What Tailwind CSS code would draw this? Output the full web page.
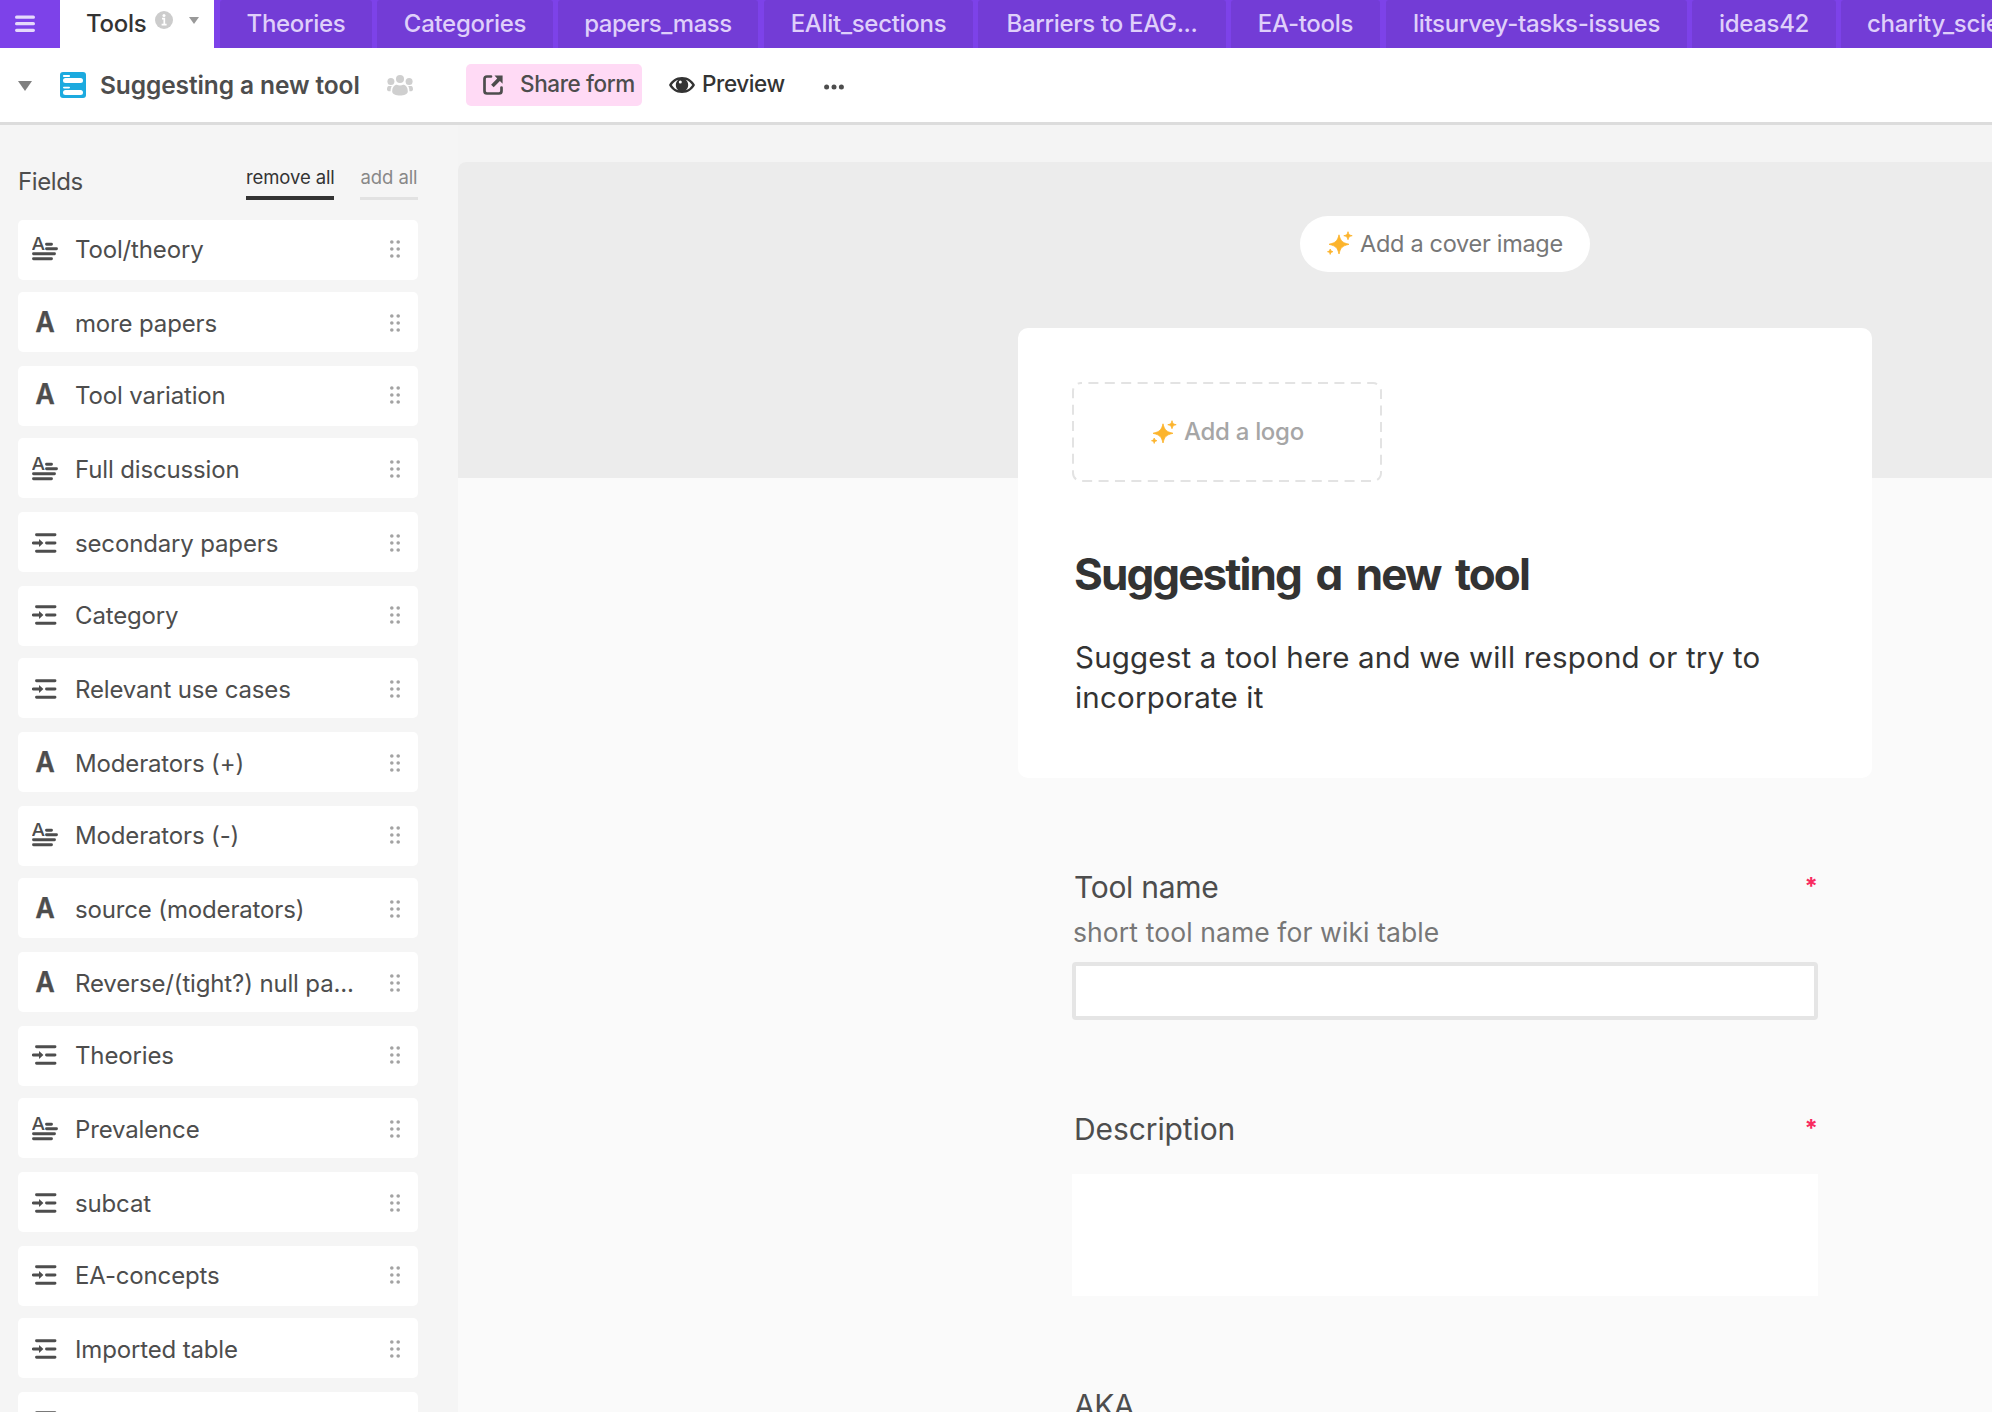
<!DOCTYPE html>
<html lang="en">
<head>
<meta charset="utf-8">
<title>Suggesting a new tool</title>
<script src="https://cdn.jsdelivr.net/npm/@tailwindcss/browser@4"></script>
</head>
<body class="h-[1412px] w-[1992px] overflow-hidden bg-[#f4f4f4] font-['Inter',sans-serif] text-[#4d4d4d]">
<svg class="hidden">
  <symbol id="i-long" viewBox="0 0 26 24">
    <text x="-.5" y="12.800" textLength="13.400" lengthAdjust="spacingAndGlyphs" font-family="Inter" font-weight="500" font-size="17.500" fill="#4d4d4d">A</text>
    <g stroke="#4d4d4d" stroke-width="2.9" stroke-linecap="round"><path d="M14.5 7.2h5M14.5 11.8h10M1.5 16.8h21M1.5 21.8h18"/></g>
  </symbol>
  <symbol id="i-text" viewBox="0 0 26 24">
    <text x="3.500" y="21.300" textLength="19" lengthAdjust="spacingAndGlyphs" font-family="Inter" font-weight="600" font-size="28" fill="#4d4d4d" stroke="#4d4d4d" stroke-width=".5" stroke-linejoin="round">A</text>
  </symbol>
  <symbol id="i-link" viewBox="0 0 26 24">
    <path d="M4.5 3.7h18.5M4.5 20.3h18.5M14.5 12h8.5M1.3 12h7" stroke="#4d4d4d" stroke-width="2.9" stroke-linecap="round" fill="none"/>
    <path d="M7 8l4.4 4L7 16z" fill="#4d4d4d"/>
  </symbol>
  <symbol id="i-grip" viewBox="0 0 10 18">
    <g fill="#a3a3a3"><circle cx="1.8" cy="2" r="1.8"/><circle cx="8.2" cy="2" r="1.8"/><circle cx="1.8" cy="9" r="1.8"/><circle cx="8.2" cy="9" r="1.8"/><circle cx="1.8" cy="16" r="1.8"/><circle cx="8.2" cy="16" r="1.8"/></g>
  </symbol>
  <symbol id="i-spark" viewBox="0 0 26 25">
    <g fill="#fcb42c" stroke="#fcb42c" stroke-width=".8" stroke-linejoin="round"><path d="M12 3.8C13.600 10 15 11.600 22 13.300 15 15 13.600 16.600 12 23 10.400 16.600 9 15 2 13.300 9 11.600 10.400 10 12 3.800z"/><path d="M21 .7c.8 3 1.400 3.400 4.200 4-2.800.6-3.400 1-4.200 4-.8-3-1.400-3.400-4.200-4 2.800-.6 3.400-1 4.200-4z"/><path d="M3.200 18c.5 1.900 1 2.200 2.700 2.700-1.700.5-2.200.8-2.700 2.700-.5-1.900-1-2.200-2.700-2.700 1.700-.5 2.200-.8 2.700-2.700z"/></g>
  </symbol>
</svg>

<nav class="flex h-12 gap-[5px] bg-[#7d42e9] text-[24px] font-medium leading-[47px] tracking-[-0.3px] text-[#dfcffa]">
  <button class="flex w-[55px] items-center pl-[15px]">
    <svg class="h-[18px] w-5" viewBox="0 0 20 18"><path d="M1.600 2.200h16.800M1.600 8.700h16.800M1.600 15.300h16.800" stroke="#e5d9fb" stroke-width="3.200" stroke-linecap="round"/></svg>
  </button>
  <div class="mr-px flex w-[154px] bg-white pl-[26px] text-[#333]">
    <span class="w-[62px]">Tools</span>
    <svg class="ml-[7px] mt-[11px] h-[18px] w-[18px]" viewBox="0 0 18 18"><circle cx="9" cy="9" r="9" fill="#ccc"/><circle cx="9" cy="4.600" r="1.500" fill="#fff"/><path d="M7 7.700h2.300v5.300M6.600 13.600h5" stroke="#fff" stroke-width="1.700" fill="none"/></svg>
    <svg class="ml-4 mt-[17px] h-[7px] w-[10px]" viewBox="0 0 10 7"><path d="M0 0h10L5 7z" fill="#999"/></svg>
  </div>
  <div class="w-[152px] rounded-t-[3px] bg-[#733cd6] text-center">Theories</div>
  <div class="w-[176px] rounded-t-[3px] bg-[#733cd6] text-center">Categories</div>
  <div class="mr-px w-[200px] rounded-t-[3px] bg-[#733cd6] text-center tracking-[-0.450px]">papers_mass</div>
  <div class="w-[209px] rounded-t-[3px] bg-[#733cd6] text-center">EAlit_sections</div>
  <div class="w-[248px] rounded-t-[3px] bg-[#733cd6] text-center">Barriers to EAG...</div>
  <div class="mr-px w-[149px] rounded-t-[3px] bg-[#733cd6] text-center">EA-tools</div>
  <div class="w-[301px] rounded-t-[3px] bg-[#733cd6] text-center">litsurvey-tasks-issues</div>
  <div class="w-[144px] rounded-t-[3px] bg-[#733cd6] text-center">ideas42</div>
  <div class="w-[151px] shrink-0 overflow-hidden whitespace-nowrap rounded-tl-[3px] bg-[#733cd6] pl-[26px]">charity_science</div>
</nav>

<header class="flex h-[77px] items-start border-b-[3px] border-[#dcdcdc] bg-white">
  <svg class="ml-[18px] mt-[33px] h-[10px] w-[14px]" viewBox="0 0 14 10"><path d="M0 0h14L7 10z" fill="#808080"/></svg>
  <svg class="ml-7 mt-6 h-[26px] w-[26px]" viewBox="0 0 26 26"><rect width="26" height="26" rx="3" fill="#1caadf"/><g fill="#fff"><rect x="3" y="3" width="7" height="2" rx=".8"/><rect x="3" y="6" width="20" height="5" rx="2.500"/><rect x="3" y="14.700" width="7" height="1.700" rx=".8"/><rect x="3" y="18" width="20" height="5" rx="2.500"/></g></svg>
  <h1 class="ml-[14px] mt-[17px] w-[287px] whitespace-nowrap text-[24.500px] font-semibold leading-10 tracking-[-0.100px]">Suggesting a new tool</h1>
  <svg class="mt-[27px] h-[21px] w-[26px]" viewBox="0 0 26 21"><g fill="#cfcfcf"><circle cx="13" cy="4" r="4"/><circle cx="3.900" cy="6.400" r="3.500"/><circle cx="22.100" cy="6.400" r="3.500"/><path d="M5.200 16.500c0-4.500 2.300-6.800 4.600-6.800 1 .5 2 .8 3.200.8s2.200-.3 3.200-.8c2.300 0 4.600 2.300 4.600 6.800 0 5.400-15.600 5.400-15.600 0zM1.800 11h3c-.9 1.500-1.200 3.200-1.200 5.300C1.300 16.600 0 15.800 0 14.500 0 12.500.6 11 1.800 11zM24.200 11h-3c.9 1.500 1.200 3.200 1.200 5.300 2.300.3 3.600-.5 3.600-1.800 0-2-.6-3.500-1.800-3.500z"/></g></svg>
  <button class="ml-[53px] mt-4 flex h-[42px] w-[176px] rounded-[5px] bg-[#ffdaf5] pl-[17px] text-[22.500px] font-medium leading-[40px] tracking-[-0.400px]">
    <svg class="mt-[11px] h-5 w-5" viewBox="0 0 20 20"><path d="M8 1.500H4A2.500 2.500 0 0 0 1.500 4v12A2.500 2.500 0 0 0 4 18.500h12a2.500 2.500 0 0 0 2.500-2.500v-3.500" fill="none" stroke="#4d4d4d" stroke-width="2.700" stroke-linecap="round"/><path d="M11.500.6h8.100v8.200l-2.700-2.700-6.200 6.200-2.600-2.600 6.100-6.200z" fill="#4d4d4d"/></svg>
    <span class="ml-[17px] whitespace-nowrap">Share form</span>
  </button>
  <button class="ml-[27px] mt-4 flex h-[42px] text-[22.500px] font-medium leading-[40px] tracking-[-0.400px] text-[#333]">
    <svg class="mt-[13px] h-4 w-[26px]" viewBox="0 0 26 16"><path fill-rule="evenodd" fill="#333" d="M13 0c6 0 10.500 3.500 13 8-2.500 4.500-7 8-13 8S2.500 12.500 0 8c2.500-4.500 7-8 13-8zM2.800 8c1.700 2.700 4 4.600 6.600 5.300C7.700 12 6.800 10.200 6.800 8s.9-4 2.600-5.300C6.800 3.400 4.500 5.300 2.800 8zm20.400 0c-1.700-2.700-4-4.600-6.600-5.300 1.700 1.300 2.600 3.100 2.600 5.300s-.9 4-2.600 5.300c2.600-.7 4.900-2.600 6.600-5.300z"/><circle cx="11.300" cy="5" r="1.500" fill="#fff"/></svg>
    <span class="ml-[7px] w-[85px] whitespace-nowrap text-left">Preview</span>
  </button>
  <svg class="ml-[37px] mt-[36px] h-[6px] w-5" viewBox="0 0 20 6"><g fill="#4d4d4d"><circle cx="2.600" cy="3" r="2.500"/><circle cx="10" cy="3" r="2.500"/><circle cx="17.400" cy="3" r="2.500"/></g></svg>
</header>

<div class="flex h-[1287px]">
  <aside class="w-[458px] overflow-hidden bg-[#f5f5f5] px-[18px]">
    <div class="flex h-[95px] w-[400px] pt-[37px]">
      <h2 class="flex-1 pt-px text-[24px] leading-[38px] tracking-[-0.400px]">Fields</h2>
      <a class="mr-[26px] h-[38px] w-[88px] whitespace-nowrap border-b-4 border-[#333] text-center text-[18.500px] leading-[31px] tracking-[-0.100px] text-[#333]">remove all</a>
      <a class="h-[38px] w-[58px] whitespace-nowrap border-b-3 border-[#e2e2e2] text-center text-[18.500px] leading-[31px] tracking-[-0.100px] text-[#888]">add all</a>
    </div>
    <ul id="fields" class="w-[400px] text-[24px] leading-[30px] tracking-[-0.150px]"></ul>
  </aside>

  <main class="mt-[37px] flex-1 overflow-hidden rounded-tl-lg bg-[#fafafa]">
    <div class="flex h-[316px] flex-col bg-[#ececec]">
      <div class="flex w-full pl-[560px]">
        <div class="flex w-[854px] flex-col items-center">
          <button class="mt-[54px] flex h-14 w-[290px] shrink-0 items-center rounded-full bg-white pl-[27px] text-[23.500px] leading-[56px] tracking-[-0.300px] text-[#777]">
            <svg class="-mt-[1px] h-[25px] w-[26px]"><use href="#i-spark"/></svg>
            <span class="ml-[7px] whitespace-nowrap">Add a cover image</span>
          </button>
          <section class="mt-14 h-[450px] w-[854px] shrink-0 rounded-[10px] bg-white px-[54px] pt-[54px]">
            <div class="relative flex h-[100px] w-[310px] items-center">
              <svg class="absolute inset-0 h-[100px] w-[310px]" viewBox="0 0 310 100"><rect x="1" y="1" width="308" height="98" rx="8" fill="none" stroke="#e3e3e3" stroke-width="2" stroke-dasharray="10 6.400" stroke-dashoffset="9"/></svg>
              <svg class="ml-[79px] h-[25px] w-[26px]"><use href="#i-spark"/></svg>
              <span class="-mt-px ml-[7px] whitespace-nowrap text-[24px] font-medium tracking-[-0.300px] text-[#a6a6a6]">Add a logo</span>
            </div>
            <h2 class="mt-[60px] whitespace-nowrap pl-[2px] text-[44px] font-bold leading-[64px] tracking-[-1.900px] text-[#333] [font-feature-settings:'cv11'] [word-spacing:6px]">Suggesting a new tool</h2>
            <p class="mt-[31px] whitespace-nowrap pl-[3px] text-[29.500px] leading-10 tracking-[0.200px] text-[#333]">Suggest a tool here and we will respond or try to<br>incorporate it</p>
          </section>
          <section class="flex w-[746px] flex-col pt-[87px]">
            <div class="flex h-[45px] justify-between pl-[2px]">
              <label class="text-[30px] leading-[44px] tracking-[-0.300px]">Tool name</label>
              <span class="mt-[7px] text-[24px] font-bold leading-[30px] text-[#f82b60]">*</span>
            </div>
            <p class="h-[52px] pl-px text-[26.500px] leading-[44px] tracking-[0.100px] text-[#777]">short tool name for wiki table</p>
            <div class="h-[58px] rounded border-4 border-[#e5e5e5] bg-white"></div>
            <div class="mt-[87px] flex h-[67px] justify-between pl-[2px]">
              <label class="text-[30px] leading-[44px] tracking-[-0.100px]">Description</label>
              <span class="mt-[7px] text-[24px] font-bold leading-[30px] text-[#f82b60]">*</span>
            </div>
            <div class="h-[122px] bg-white"></div>
            <div class="mt-[87px] pl-[2px]"><label class="text-[30px] leading-[44px] tracking-[-0.500px]">AKA</label></div>
          </section>
        </div>
      </div>
    </div>
  </main>
</div>

<script>
// Each row: icon, label, gap below, and whether the label sits one step lower in its card
const A = 'mb-3', B = 'mb-3.5';
const rows = [
  ['long', 'Tool/theory', A, 0], ['text', 'more papers', B, 1], ['text', 'Tool variation', A, 0], ['long', 'Full discussion', B, 1],
  ['link', 'secondary papers', B, 1], ['link', 'Category', A, 0], ['link', 'Relevant use cases', B, 1], ['text', 'Moderators (+)', B, 1],
  ['long', 'Moderators (-)', A, 0], ['text', 'source (moderators)', B, 1], ['text', 'Reverse/(tight?) null pa...', B, 1], ['link', 'Theories', A, 0],
  ['long', 'Prevalence', B, 1], ['link', 'subcat', B, 1], ['link', 'EA-concepts', A, 0], ['link', 'Imported table', B, 1], ['link', '', A, 0]
];
document.getElementById('fields').innerHTML = rows.map(([icon, label, gap, low]) =>
  `<li class="flex h-[60px] items-center rounded-[5px] bg-white pl-[14px] pr-[18px] ${gap} ${low ? 'pt-px' : 'pb-0.5'}">
    <svg class="h-6 w-[26px] shrink-0"><use href="#i-${icon}"/></svg>
    <span class="ml-[17px] flex-1 whitespace-nowrap ${low ? 'pt-0.5' : 'pt-px'}">${label}</span>
    <svg class="h-[18px] w-[10px]"><use href="#i-grip"/></svg>
  </li>`).join('');
</script>
</body>
</html>
